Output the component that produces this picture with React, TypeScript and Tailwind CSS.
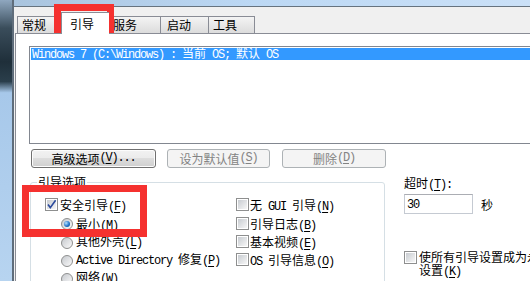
import React from 'react';

const mono = "font-['Liberation_Mono',monospace] tracking-[-1.2px]";

// SimSun-like mix: ASCII runs in a 6px mono, CJK in Noto
function T({ s }: { s: string }) {
  const parts = s.split(/([\x20-\x7e]+)/);
  return (
    <span className="whitespace-pre">
      {parts.map((p, i) =>
        i % 2 === 1 ? (
          <span key={i} className={mono}>{p}</span>
        ) : p ? (
          <span key={i}>{p}</span>
        ) : null
      )}
    </span>
  );
}

function Acc({ k, tail = '' }: { k: string; tail?: string }) {
  return (
    <span className={mono}>
      (<u className="underline-offset-2">{k}</u>){tail}
    </span>
  );
}

function Check({ on }: { on?: boolean }) {
  return (
    <span className="relative flex w-[13px] h-[13px] shrink-0 border border-[#8e8f8f] bg-white p-[1px]">
      <span className="flex-1 bg-linear-to-br from-[#c8ccd1] to-[#f7f7f7]" />
      {on && (
        <svg className="absolute left-0 top-0" width="11" height="11" viewBox="0 0 11 11">
          <path d="M2 5.5 L4.3 8.6 L9.6 1.2" fill="none" stroke="#2b4a9c" strokeWidth="1.6" />
        </svg>
      )}
    </span>
  );
}

function Radio({ on }: { on?: boolean }) {
  return (
    <span className="flex w-[12px] h-[12px] mt-[1px] shrink-0 items-center justify-center rounded-full border border-[#8e8f8f] bg-linear-to-br from-[#c6c9ce] to-[#fafafa]">
      {on && (
        <span className="w-[6px] h-[6px] rounded-full bg-[radial-gradient(circle_at_35%_35%,#b9e2ff,#2176cc_55%,#0e3f82)]" />
      )}
    </span>
  );
}

const tabBase = "flex items-center h-[17px] border-l border-t border-[#898c95] bg-linear-to-b from-[#f4f4f4] to-[#dcdcdc] leading-[12px]";

export default function App() {
  return (
    <div className="relative flex w-[530px] h-[281px] overflow-hidden bg-white text-[12px] text-black font-['Noto_Sans_CJK_SC',sans-serif]">
      {/* window frame, left */}
      <div className="w-[14px] shrink-0 border-r-2 border-[#5f6d7b] bg-[linear-gradient(#8fa7bf_0%,#3a4d5b_10%,#1f2f3a_22%,#2a3e4b_29%,#a7c8ea_33%,#b7d4f0_100%)]" />

      <div className="flex flex-col w-[600px] shrink-0">
        {/* window frame, top */}
        <div className="h-[7px] shrink-0 border-b border-[#66737f] bg-[linear-gradient(90deg,#a9c4de,#bcd8f4_40%,#cfe3f8)]" />

        <div className="flex flex-1 flex-col bg-[#f0f0f0] pl-[1px]">
          {/* tabs */}
          <div className="flex h-[26px] shrink-0 items-end pl-[2px]">
            <div className={`${tabBase} w-[44px] pl-[4px]`}>常规</div>
            <div className="relative z-10 -mb-[1px] flex h-[22px] w-[48px] items-center border-l border-t border-[#898c95] bg-white pl-[8px] leading-[12px]">
              引导
            </div>
            <div className={`${tabBase} w-[51px] pl-[3px]`}>服务</div>
            <div className={`${tabBase} w-[48px] pl-[6px]`}>启动</div>
            <div className={`${tabBase} w-[47px] border-r pl-[4px]`}>工具</div>
          </div>

          {/* tab panel */}
          <div className="flex flex-1 flex-col border-l border-t border-[#898c95] bg-white pl-[13px] pt-[12px]">
            {/* OS list */}
            <div className="h-[98px] w-[560px] shrink-0 border border-[#828790] pl-[1px] pt-[1px]">
              <div className="flex h-[12px] items-center bg-[#3399ff] pl-[1px] leading-[12px] text-white whitespace-nowrap">
                <T s="Windows 7 (C:\Windows) : 当前 OS; 默认 OS" />
              </div>
            </div>

            {/* buttons */}
            <div className="ml-[2px] mt-[5px] flex shrink-0 gap-[11px]">
              <button className="flex h-[19px] w-[125px] items-center justify-center rounded-[3px] border border-[#707070] bg-[linear-gradient(#f2f2f2,#ebebeb_50%,#dddddd_50%,#cfcfcf)] leading-[13px] shadow-[inset_0_0_0_1px_#fcfcfc]">
                <T s="高级选项" />
                <Acc k="V" tail="..." />
              </button>
              <button className="flex h-[19px] w-[103px] items-center justify-center rounded-[3px] border border-[#adb2b5] bg-[#f4f4f4] leading-[13px] text-[#838383]">
                <T s="设为默认值" />
                <Acc k="S" />
              </button>
              <button className="ml-[1px] flex h-[19px] w-[104px] items-center justify-center rounded-[3px] border border-[#adb2b5] bg-[#f4f4f4] leading-[13px] text-[#838383]">
                <T s="删除" />
                <Acc k="D" />
              </button>
            </div>

            {/* options + timeout */}
            <div className="mt-[8px] flex flex-1 items-start">
              <div className="relative ml-[1px] mt-[6px] h-[200px] w-[355px] shrink-0 rounded-[3px] border border-[#d5dfe5] pl-[14px] pt-[15px]">
                <span className="absolute -top-[8px] left-[6px] bg-white px-[1px] leading-[14px]">引导选项</span>
                <div className="flex">
                  <div className="flex w-[191px] flex-col">
                    <div className="flex h-[19px] items-start leading-[13px]">
                      <Check on />
                      <span className="ml-[2px] whitespace-nowrap">
                        <T s="安全引导" />
                        <Acc k="F" />
                      </span>
                    </div>
                    <div className="flex h-[19px] items-start pl-[16px] leading-[13px]">
                      <Radio on />
                      <span className="ml-[3px] whitespace-nowrap"><T s="最小" /><Acc k="M" /></span>
                    </div>
                    <div className="flex h-[18px] items-start pl-[16px] leading-[12px]">
                      <Radio />
                      <span className="ml-[3px] -mt-[1px] whitespace-nowrap"><T s="其他外壳" /><Acc k="L" /></span>
                    </div>
                    <div className="flex h-[18px] items-start pl-[16px] leading-[12px]">
                      <Radio />
                      <span className="ml-[3px] -mt-[1px] whitespace-nowrap"><T s="Active Directory 修复" /><Acc k="P" /></span>
                    </div>
                    <div className="flex h-[18px] items-start pl-[16px] leading-[12px]">
                      <Radio />
                      <span className="ml-[3px] -mt-[1px] whitespace-nowrap"><T s="网络" /><Acc k="W" /></span>
                    </div>
                  </div>
                  <div className="flex flex-col">
                    <div className="flex h-[19px] items-start leading-[13px]">
                      <Check />
                      <span className="ml-[1px] whitespace-nowrap"><T s="无 GUI 引导" /><Acc k="N" /></span>
                    </div>
                    <div className="flex h-[18px] items-start leading-[13px]">
                      <Check />
                      <span className="ml-[1px] whitespace-nowrap"><T s="引导日志" /><Acc k="B" /></span>
                    </div>
                    <div className="flex h-[18px] items-start leading-[13px]">
                      <Check />
                      <span className="ml-[1px] whitespace-nowrap"><T s="基本视频" /><Acc k="E" /></span>
                    </div>
                    <div className="flex h-[18px] items-start leading-[13px]">
                      <Check />
                      <span className="ml-[1px] whitespace-nowrap"><T s="OS 引导信息" /><Acc k="O" /></span>
                    </div>
                  </div>
                </div>
              </div>

              <div className="ml-[19px] flex flex-col">
                <div className="leading-[14px] whitespace-nowrap">
                  <T s="超时" />
                  <Acc k="T" tail=":" />
                </div>
                <div className="mt-[2px] flex items-center">
                  <div className="flex h-[20px] w-[69px] items-center border border-[#c5cad2] border-t-[#abadb3] bg-white pl-[2px] leading-[13px]">
                    <T s="30" />
                  </div>
                  <span className="ml-[8px] leading-[13px]">秒</span>
                </div>
                <div className="mt-[37px] flex items-start">
                  <Check />
                  <div className="ml-[2px] flex flex-col whitespace-nowrap">
                    <div className="h-[13px] leading-[12px]">
                      <T s="使所有引导设置成为永久" />
                    </div>
                    <div className="h-[13px] leading-[12px]">
                      <T s="设置" />
                      <Acc k="K" />
                    </div>
                  </div>
                </div>
              </div>
            </div>
          </div>
        </div>
      </div>

      {/* red highlight boxes */}
      <div className="absolute left-[54px] top-[4px] h-[29px] w-[60px] border-[7px] border-b-[6px] border-[#f5312f]" />
      <div className="absolute left-[22px] top-[185px] h-[52px] w-[125px] border-[7px] border-b-[8px] border-[#f5312f]" />
    </div>
  );
}
